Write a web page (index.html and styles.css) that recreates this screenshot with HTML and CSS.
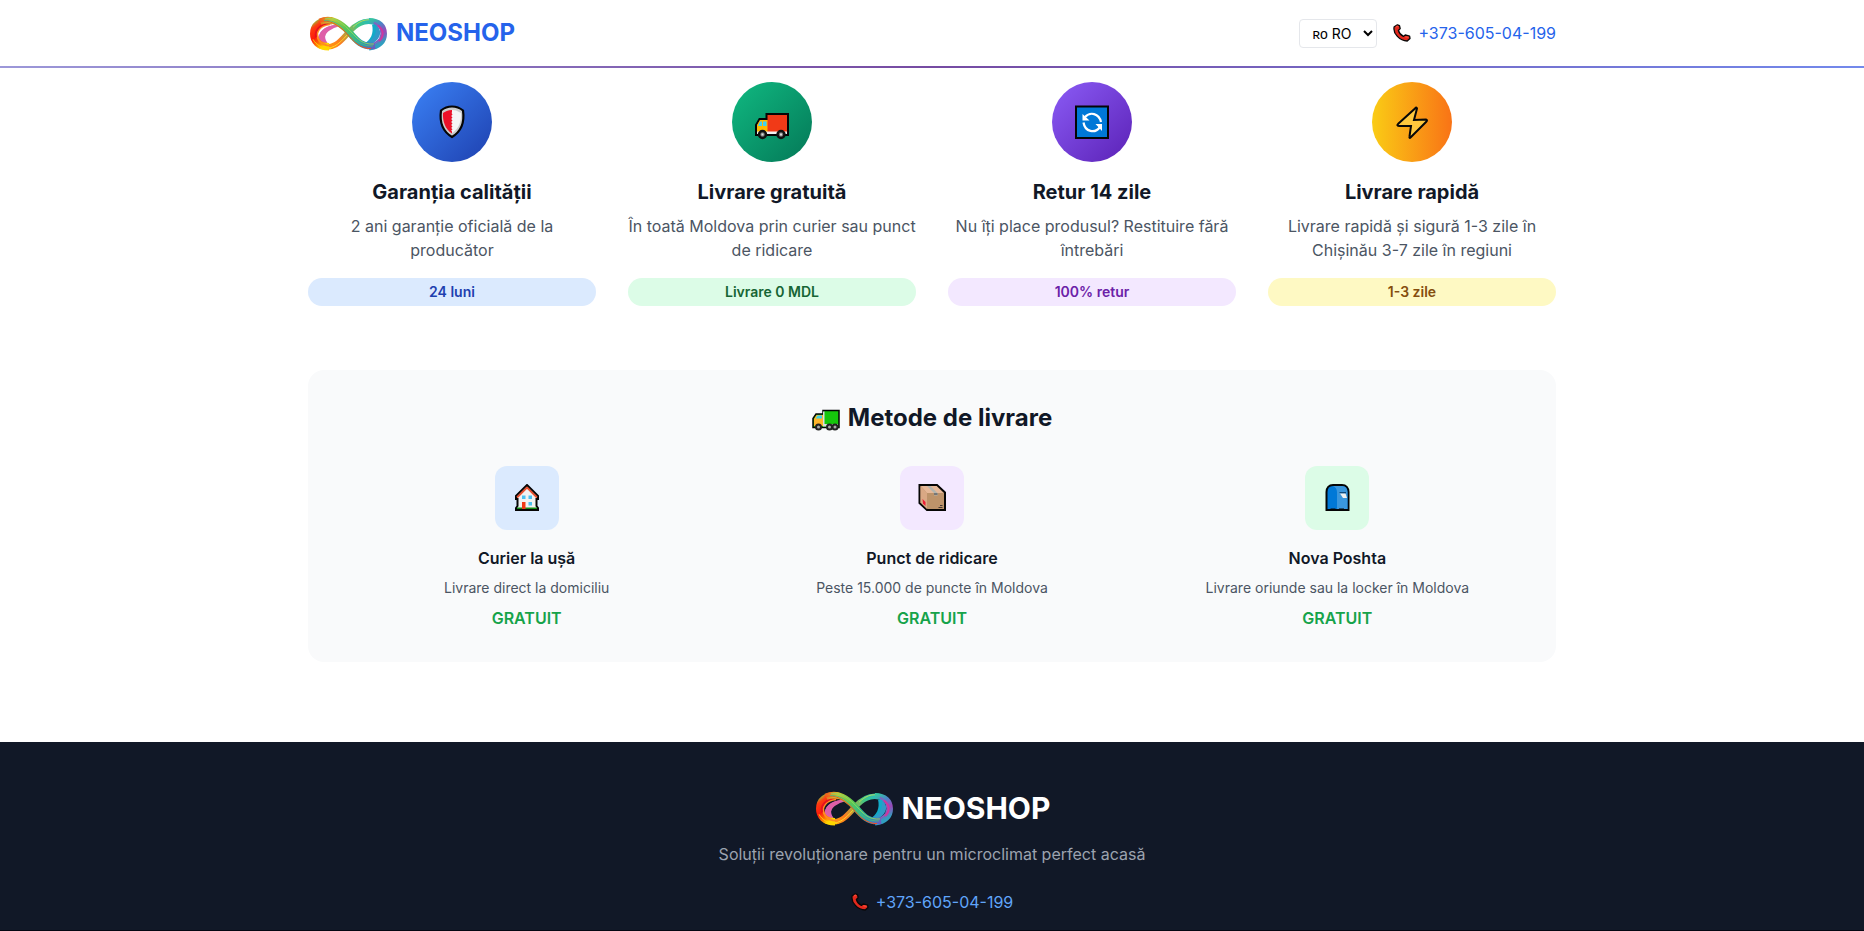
FILE: index.html
```html
<!DOCTYPE html>
<html lang="ro">
<head>
<meta charset="utf-8">
<meta name="viewport" content="width=device-width, initial-scale=1">
<title>NEOSHOP</title>
<link rel="stylesheet" href="styles.css">
</head>
<body>
<svg class="defs" aria-hidden="true">
  <defs>
    <linearGradient id="lg-left" x1="0" y1="0" x2="0.5" y2="1"><stop offset="0" stop-color="#8fd03a"/><stop offset=".2" stop-color="#ff3a10"/><stop offset=".55" stop-color="#fb1a0c"/><stop offset=".85" stop-color="#ff8a00"/><stop offset="1" stop-color="#ffd800"/></linearGradient>
    <linearGradient id="lg-right" x1="0" y1="0" x2="0.3" y2="1"><stop offset="0" stop-color="#35c4a0"/><stop offset=".3" stop-color="#4a86c8"/><stop offset=".65" stop-color="#9a48b8"/><stop offset="1" stop-color="#2f9fc0"/></linearGradient>
    <linearGradient id="lg-front" gradientUnits="userSpaceOnUse" x1="12" y1="4" x2="66" y2="33"><stop offset="0" stop-color="#f0641c"/><stop offset=".16" stop-color="#c8c830"/><stop offset=".42" stop-color="#5cc850"/><stop offset=".62" stop-color="#35bc88"/><stop offset=".82" stop-color="#2898b8"/><stop offset="1" stop-color="#6a5cc0"/></linearGradient>
    <linearGradient id="lg-back" gradientUnits="userSpaceOnUse" x1="14" y1="32" x2="66" y2="4"><stop offset="0" stop-color="#ffae00"/><stop offset=".3" stop-color="#ff7a20"/><stop offset=".5" stop-color="#b0a840"/><stop offset=".72" stop-color="#3fc884"/><stop offset="1" stop-color="#22b4cc"/></linearGradient>
    <symbol id="logo" viewBox="0 0 80 36">
      <g transform="translate(0 2) scale(1 .93)">
      <path d="M12 29C8 20 13 11 26 9C17 15 14 22 21 30Z" fill="#c667c4"/>
      <path d="M28 8C15 10 9 18 12 25C14 29 17 31 22 31C13 23 16 15 31 10Z" fill="#de5fa8"/>
      <path d="M68 7C75 16 71 25 55 30C63 24 66 18 64 8Z" fill="#12aac8"/>
      <path d="M54 29C64 27 69 20 68 9C76 16 72 26 60 31Z" fill="#2f9ac8"/>
      <path d="M12 31C27 36 34 24 41 16C48 8 55 3 65 5" fill="none" stroke="url(#lg-back)" stroke-width="6"/>
      <path d="M14 33C27 36 34 25 41 17" fill="none" stroke="#ffd926" stroke-width="1"/>
      <path d="M45 11C51 5 57 1 67 4" fill="none" stroke="#b7dc58" stroke-width="1"/>
      <path d="M24 4C12 3 6 9 6 18C6 26 11 32 21 32" fill="none" stroke="url(#lg-left)" stroke-width="8"/>
      <path d="M22 8C12 9 7 16 10 23C12 29 17 31 24 31" fill="none" stroke="#ff8d20" stroke-width="2"/>
      <path d="M26 6C15 6 6 12 8 22" fill="none" stroke="#e51220" stroke-width="2"/>
      <path d="M5 24C8 30 14 34 23 34" fill="none" stroke="#ffd500" stroke-width="1"/>
      <path d="M61 4C71 4 76 10 76 18C76 26 71 32 61 33" fill="none" stroke="url(#lg-right)" stroke-width="6"/>
      <path d="M66 6C73 10 75 17 72 23C69 28 64 30 58 31" fill="none" stroke="#7d65c0" stroke-width="2"/>
      <path d="M70 9C76 14 76 21 71 26" fill="none" stroke="#d0359f" stroke-width="2"/>
      <path d="M12 5C24 0 33 7 41 16C48 25 54 33 67 31" fill="none" stroke="url(#lg-front)" stroke-width="7"/>
      <path d="M17 2C28 0 36 8 43 16C50 24 55 30 66 29" fill="none" stroke="#8ed85c" stroke-width="1"/>
      <path d="M10 5C22 2 31 9 39 18C45 26 52 34 63 34" fill="none" stroke="#ff4b18" stroke-width="1"/>
      <path d="M16 4C27 3 34 10 41 18C48 26 55 32 65 31" fill="none" stroke="#4db87a" stroke-width="1"/>
      </g>
    </symbol>
    <symbol id="phone" viewBox="0 0 18 18">
      <path d="M1.2 2.7L4.4.8 6.5 1.6 7.2 4.6 5.4 6.5C6 9 8 11 10.4 12.4L12.2 11 16.6 12.2 17 14.4 14.2 17C7 17-.5 9.5 1.2 2.7Z" fill="#e2281d" stroke="#080808" stroke-width="1.3" stroke-linejoin="round"/>
      <path d="M3 2.8L5.2 2.3M12.4 12.8L15.5 13.5" stroke="#f54834" stroke-width="1.6"/>
    </symbol>
  </defs>
</svg>

<header class="header">
  <div class="container header-row">
    <a class="brand" href="#"><svg class="logo" aria-hidden="true"><use href="#logo"/></svg><span>NEOSHOP</span></a>
    <div class="header-tools">
      <select class="lang" aria-label="Limba"><option>ʀᴏ RO</option><option>ʀᴜ RU</option></select>
      <a class="tel" href="tel:+37360504199"><svg class="phone" aria-hidden="true"><use href="#phone"/></svg>+373-605-04-199</a>
    </div>
  </div>
</header>

<main class="container main">
  <section class="features">
    <article class="feature">
      <div class="disc blue">
        <svg width="36" height="36" viewBox="0 0 36 36" aria-hidden="true">
          <path d="M18 2.5C22 2.5 26 4 29 6.5C30.500 17 28 27 18 33C8 27 5.500 17 7 6.500C10 4 14 2.500 18 2.500Z" fill="#ccc" stroke="#050505" stroke-width="2.200"/>
          <path d="M18 6L22 6.500 27 9C27.500 17 25 25 18 29Z" fill="#f5f5f5"/>
          <path d="M18 6C14 6 11 7.500 9 9C8.500 17 11 25 18 29.500V27.500L17 26.500 18.500 25.200 17 24 18.500 22.500 17 21 18.500 19.500 17 18 18.500 16.500 17 15 18.500 13.500 17 12 18.500 10.500 17.500 9 18 8Z" fill="#ed1128"/>
        </svg>
      </div>
      <h3>Garanția calității</h3>
      <p>2 ani garanție oficială de la producător</p>
      <span class="pill pill-blue">24 luni</span>
    </article>
    <article class="feature">
      <div class="disc green">
        <svg width="36" height="36" viewBox="0 0 36 36" aria-hidden="true">
          <path d="M12.500 10H34V31H2V21L5.500 15H12.500Z" fill="#f03a17" stroke="#050505" stroke-width="2"/>
          <path d="M3 21L6 16H13.500V30H3Z" fill="#ffb900"/><path d="M4 22L6 17.500H8V22ZM9 17.500H12.500V22H9Z" fill="#3cd2f5"/>
          <path d="M3 27.500H33V30H3Z" fill="#f2f2f2"/>
          <circle cx="8.500" cy="30.500" r="3.500" fill="#777" stroke="#111" stroke-width="2.500"/><circle cx="27" cy="30.500" r="3.500" fill="#777" stroke="#111" stroke-width="2.500"/>
          <path d="M7.500 29.500h2v2h-2zM26 29.500h2v2h-2z" fill="#ddd"/>
        </svg>
      </div>
      <h3>Livrare gratuită</h3>
      <p>În toată Moldova prin curier sau punct de ridicare</p>
      <span class="pill pill-green">Livrare 0 MDL</span>
    </article>
    <article class="feature">
      <div class="disc purple">
        <svg width="36" height="36" viewBox="0 0 36 36" aria-hidden="true">
          <path d="M2 2.500H34V34H2Z" fill="#0078d7" stroke="#050505" stroke-width="2"/>
          <path d="M11 13C16 7.500 25 9 27 18M9.500 18.500C11 28 21 30 26 23" fill="none" stroke="#fff" stroke-width="2.200"/>
          <path d="M8.500 10V16.500H15.500ZM28 27V20H21.500Z" fill="#fff"/>
        </svg>
      </div>
      <h3>Retur 14 zile</h3>
      <p>Nu îți place produsul? Restituire fără întrebări</p>
      <span class="pill pill-purple">100% retur</span>
    </article>
    <article class="feature">
      <div class="disc yellow">
        <svg width="36" height="36" viewBox="0 0 36 36" aria-hidden="true">
          <path d="M21 4.500Q22.500 2.500 23 4.500L20 16 32 15.500Q34 16 32 18L17 33Q15 35 15.500 32.500L17 22H5Q2 22 4.500 19.500Z" fill="#ffc83d" stroke="#080808" stroke-width="2"/>
        </svg>
      </div>
      <h3>Livrare rapidă</h3>
      <p>Livrare rapidă și sigură 1-3 zile în Chișinău 3-7 zile în regiuni</p>
      <span class="pill pill-yellow">1-3 zile</span>
    </article>
  </section>

  <section class="delivery">
    <h2>
      <svg width="28" height="26" viewBox="0 -4 28 26" aria-hidden="true">
        <path d="M11 1.500H27V18.500H1V9.500L4 5H11Z" fill="#16c60c" stroke="#050505" stroke-width="1.500"/>
        <path d="M2 10L4.500 6H11V17H2Z" fill="#ffb52b"/><path d="M4 9L5.500 6.500H10V9.500H4Z" fill="#3cd2e8"/><path d="M11 2.500H12.500V16H11ZM11 15H26V17.500H11Z" fill="#ddd"/>
        <g fill="#aaa" stroke="#222" stroke-width="2"><circle cx="6.500" cy="18" r="2.500"/><circle cx="17.500" cy="18" r="2.500"/><circle cx="23" cy="18" r="2.500"/></g>
      </svg>
      <span>Metode de livrare</span>
    </h2>
    <div class="methods">
      <article class="method">
        <div class="tile tile-blue">
          <svg width="28" height="28" viewBox="0 0 28 28" aria-hidden="true">
            <path d="M14 1L25 12V15H23.500V22L25 24V26H3V24L4.500 22V15H3V12Z" fill="#f2f2f2" stroke="#050505" stroke-width="2"/>
            <path d="M4 13.500L14 3.500 24 13.500" fill="none" stroke="#e8502f" stroke-width="1.800"/>
            <path d="M4 23.500H24V25H4Z" fill="#168c16"/><path d="M9 18H12.500V25H9Z" fill="#f03a17"/><path d="M9 11.500h3.500V15H9zM15.500 11.500H19V15h-3.500zM15.500 18H19v3.500h-3.500z" fill="#4cc2f1"/>
          </svg>
        </div>
        <h4>Curier la ușă</h4><p>Livrare direct la domiciliu</p><strong>GRATUIT</strong>
      </article>
      <article class="method">
        <div class="tile tile-purple">
          <svg width="28" height="28" viewBox="0 0 28 28" aria-hidden="true">
            <path d="M1.500 1H19L27 8.500V26H9L1.500 19Z" fill="#bd936a" stroke="#050505" stroke-width="2"/>
            <path d="M2.500 2L9 9V25L2.500 18.500Z" fill="#d9a884"/><path d="M3 2H18.500L25.500 9H9Z" fill="#e6b898"/>
            <path d="M9 2H12.500L19.500 9V11.500H16V9Z" fill="#b4b4ac"/><path d="M16 9H19.500V11H16Z" fill="#777"/>
            <path d="M4.500 15L7.500 18V22L5 19.500Z" fill="#ed1c35"/><path d="M22 21h2.500v1H22zM20.500 23h4v1h-4z" fill="#443a33"/>
          </svg>
        </div>
        <h4>Punct de ridicare</h4><p>Peste 15.000 de puncte în Moldova</p><strong>GRATUIT</strong>
      </article>
      <article class="method">
        <div class="tile tile-green">
          <svg width="28" height="28" viewBox="0 0 28 28" aria-hidden="true">
            <path d="M3.500 26V8C3.500 4 6 1 10 1H19C23 1 25.500 4 25.500 8V26H3.500Z" fill="#0078d7" stroke="#050505" stroke-width="2"/>
            <path d="M10 2H19C22.500 2 24.500 5 24.500 8V25H14V8C14 5 12.500 3 10 2Z" fill="#3a96dd"/>
            <path d="M7.500 26V24.500H12.500V26ZM16 26V24.500H21V26Z" fill="#050505"/>
            <path d="M16 8H23V9.500H17.500Z" fill="#124b7c"/><path d="M17 9.500H22.500L24 14H20Z" fill="#f0f0f0"/>
          </svg>
        </div>
        <h4>Nova Poshta</h4><p>Livrare oriunde sau la locker în Moldova</p><strong>GRATUIT</strong>
      </article>
    </div>
  </section>
</main>

<footer class="footer">
  <a class="brand footer-brand" href="#"><svg class="logo" aria-hidden="true"><use href="#logo"/></svg><span>NEOSHOP</span></a>
  <p>Soluții revoluționare pentru un microclimat perfect acasă</p>
  <a class="tel" href="tel:+37360504199"><svg class="phone" aria-hidden="true"><use href="#phone"/></svg>+373-605-04-199</a>
</footer>
</body>
</html>
```
FILE: styles.css
```css
*, *::before, *::after { box-sizing: border-box; }
body, h2, h3, h4, p { margin: 0; }
body {
  font-family: Inter, "Liberation Sans", sans-serif;
  font-size: 16px;
  line-height: 24px;
  color: #111827;
  background: #fff;
}
a { color: inherit; text-decoration: none; }
svg { display: block; flex-shrink: 0; }
.defs { position: absolute; width: 0; height: 0; }
.container { width: 100%; max-width: 1280px; margin: 0 auto; padding: 0 16px; }

.header {
  padding: 15px 0;
  border-bottom: 2px solid;
  border-image: linear-gradient(90deg, #9c98d9, #764ba2, #7389ec) 1;
}
.header-row { display: flex; align-items: center; justify-content: space-between; }
.brand { display: flex; align-items: center; gap: 8px; font-size: 24px; line-height: 36px; font-weight: 700; color: #2563eb; }
.logo { width: 80px; height: 36px; }
.header-tools { display: flex; align-items: center; gap: 16px; }
.lang {
  height: 29px;
  padding: 4px 8px;
  border: 1px solid #e5e7eb;
  border-radius: 4px;
  background: #fff;
  color: #000;
  font: 14px/20px Inter, "Liberation Sans", sans-serif;
}
.tel { display: flex; align-items: center; gap: 7px; color: #2563eb; }
.phone { width: 18px; height: 18px; }

.main { padding-top: 14px; padding-bottom: 80px; }
.features { display: grid; grid-template-columns: repeat(4, 1fr); gap: 32px; text-align: center; }
.disc { display: flex; align-items: center; justify-content: center; width: 80px; height: 80px; margin: 0 auto 16px; border-radius: 50%; }
.blue { background: linear-gradient(135deg, #3b82f6, #1e40af); }
.green { background: linear-gradient(135deg, #10b981, #047857); }
.purple { background: linear-gradient(135deg, #8b5cf6, #5b21b6); }
.yellow { background: linear-gradient(90deg, #facc15, #f97316); }
.feature h3 { margin-bottom: 8px; font-size: 20px; line-height: 28px; font-weight: 700; }
.feature p { margin-bottom: 16px; color: #4b5563; }
.pill { display: block; padding: 4px 12px; border-radius: 14px; font-size: 14px; line-height: 20px; font-weight: 600; }
.pill-blue { background: #dbeafe; color: #1e40af; }
.pill-green { background: #dcfce7; color: #166534; }
.pill-purple { background: #f3e8ff; color: #6b21a8; }
.pill-yellow { background: #fef9c3; color: #854d0e; }

.delivery { margin-top: 64px; padding: 32px; border-radius: 16px; background: #f9fafb; text-align: center; }
.delivery h2 { display: flex; align-items: center; justify-content: center; gap: 8px; margin-bottom: 32px; font-size: 24px; line-height: 32px; font-weight: 700; }
.methods { display: grid; grid-template-columns: repeat(3, 1fr); gap: 32px; }
.tile { display: flex; align-items: center; justify-content: center; width: 64px; height: 64px; margin: 0 auto 16px; border-radius: 12px; }
.tile-blue { background: #dbeafe; }
.tile-purple { background: #f3e8ff; }
.tile-green { background: #dcfce7; }
.method h4 { margin-bottom: 8px; font-size: 16px; font-weight: 600; }
.method p { margin-bottom: 8px; font-size: 14px; line-height: 20px; color: #4b5563; }
.method strong { display: block; font-weight: 600; color: #16a34a; }

.footer { display: flex; flex-direction: column; align-items: center; padding: 48px 16px 16px; border-bottom: 1px solid #030712; background: #111827; text-align: center; }
.footer-brand { margin-bottom: 16px; font-size: 30px; color: #fff; }
.footer p { margin-bottom: 24px; color: #9ca3af; }
.footer .tel { color: #60a5fa; }
```
